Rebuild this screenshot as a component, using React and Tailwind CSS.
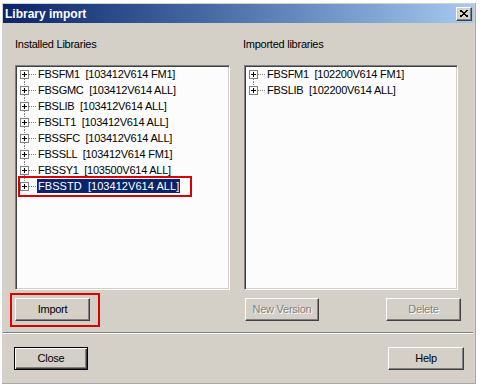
import React from "react";

const installed = [
  ["FBSFM1", "103412V614 FM1"],
  ["FBSGMC", "103412V614 ALL"],
  ["FBSLIB", "103412V614 ALL"],
  ["FBSLT1", "103412V614 ALL"],
  ["FBSSFC", "103412V614 ALL"],
  ["FBSSLL", "103412V614 FM1"],
  ["FBSSY1", "103500V614 ALL"],
  ["FBSSTD", "103412V614 ALL"],
];

const imported = [
  ["FBSFM1", "102200V614 FM1"],
  ["FBSLIB", "102200V614 ALL"],
];

const TreeLines = ({ first, last }) => (
  <svg width="18" height="16" className="shrink-0" shapeRendering="crispEdges">
    {!first && <line x1="5.5" y1="0" x2="5.5" y2="4" stroke="#808080" strokeDasharray="1 1" />}
    {!last && <line x1="5.5" y1="13" x2="5.5" y2="16" stroke="#808080" strokeDasharray="1 1" />}
    <line x1="10" y1="8.5" x2="17" y2="8.5" stroke="#808080" strokeDasharray="1 1" />
    <rect x="1.5" y="4.5" width="8" height="8" fill="#fff" stroke="#808080" />
    <line x1="3" y1="8.5" x2="8" y2="8.5" stroke="#000" />
    <line x1="5.5" y1="6" x2="5.5" y2="11" stroke="#000" />
  </svg>
);

const TreeRow = ({ name, ver, first, last, selected }) => (
  <div className="relative flex h-4 items-center pl-[3px]">
    <TreeLines first={first} last={last} />
    <span
      className={
        "whitespace-pre px-px leading-[14px] " +
        (selected ? "bg-[#0a246a] tracking-[0.05px] text-white" : "text-black")
      }
    >
      {name}  [{ver}]
    </span>
    {selected && (
      <div className="pointer-events-none absolute left-[2px] top-[-2px] h-[21px] w-[174px] border-2 border-[#d80000]" />
    )}
  </div>
);

const ListBox = ({ items, width, selectedIdx }) => (
  <div
    className={
      "h-[225px] border border-t-[#808080] border-l-[#808080] border-r-white border-b-white bg-[#fcfcfc] shadow-[inset_1px_1px_#404040,inset_-1px_-1px_#d4d0c8] " +
      width
    }
  >
    <div className="mt-[-1px] pt-px">
      {items.map(([name, ver], i) => (
        <TreeRow
          key={name}
          name={name}
          ver={ver}
          first={i === 0}
          last={i === items.length - 1}
          selected={i === selectedIdx}
        />
      ))}
    </div>
  </div>
);

const Button = ({ children, width, disabled, isDefault, className = "" }) => (
  <div
    className={
      "flex h-[23px] items-center justify-center " +
      width +
      " " +
      (isDefault
        ? "border border-black shadow-[inset_1px_1px_#fff,inset_-1px_-1px_#404040,inset_-2px_-2px_#808080] "
        : "border border-t-white border-l-white border-r-[#404040] border-b-[#404040] shadow-[inset_-1px_-1px_#808080] ") +
      className
    }
  >
    <span
      className={
        disabled
          ? "text-[#808080] [text-shadow:1px_1px_0_#fff]"
          : "text-black"
      }
    >
      {children}
    </span>
  </div>
);

export default function App() {
  return (
    <div
      className="h-[389px] w-[485px] bg-white pl-[2px] pt-[3px] text-[11px] tracking-[-0.25px]"
      style={{ fontFamily: '"Liberation Sans", Arial, sans-serif' }}
    >
      <div className="flex h-[381px] w-[474px] flex-col border-b border-r border-[#a8a8a8] bg-[#d4d0c8] p-px">
        {/* Title bar */}
        <div className="flex h-[19px] items-center justify-between bg-gradient-to-r from-[#0a246a] to-[#a6caf0] pl-[2px] pr-[2px]">
          <span className="text-[12px] font-bold tracking-normal text-white">Library import</span>
          <div className="flex h-[14px] w-[16px] items-center justify-center border border-t-white border-l-white border-r-[#404040] border-b-[#404040] bg-[#d4d0c8] shadow-[inset_-1px_-1px_#808080]">
            <svg width="8" height="7" shapeRendering="crispEdges">
              <path d="M0 0 L8 7 M8 0 L0 7" stroke="#000" strokeWidth="1.6" />
            </svg>
          </div>
        </div>

        {/* Body */}
        <div className="pl-[12px]">
          <div className="mt-[15px] flex h-[13px] leading-[13px]">
            <span className="w-[228px]">Installed Libraries</span>
            <span>Imported libraries</span>
          </div>

          <div className="mt-[14px] flex">
            <ListBox items={installed} width="w-[215px]" selectedIdx={7} />
            <div className="ml-[14px]">
              <ListBox items={imported} width="w-[214px]" selectedIdx={-1} />
            </div>
          </div>

          <div className="mt-[8px] flex">
            <div className="relative">
              <Button width="w-[75px]">Import</Button>
              <div className="pointer-events-none absolute left-[-5px] top-[-5px] h-[34px] w-[90px] border-2 border-[#d80000]" />
            </div>
            <Button width="w-[74px]" disabled className="ml-[155px]">
              New Version
            </Button>
            <Button width="w-[75px]" disabled className="ml-[67px]">
              Delete
            </Button>
          </div>
        </div>

        {/* Separator */}
        <div className="mt-[11px] h-[2px] w-[470px] border-t border-b border-t-[#808080] border-b-white" />

        <div className="mt-[13px] flex pl-[11px]">
          <Button width="w-[74px]" isDefault>
            Close
          </Button>
          <Button width="w-[76px]" className="ml-[300px]">
            Help
          </Button>
        </div>
      </div>
    </div>
  );
}
